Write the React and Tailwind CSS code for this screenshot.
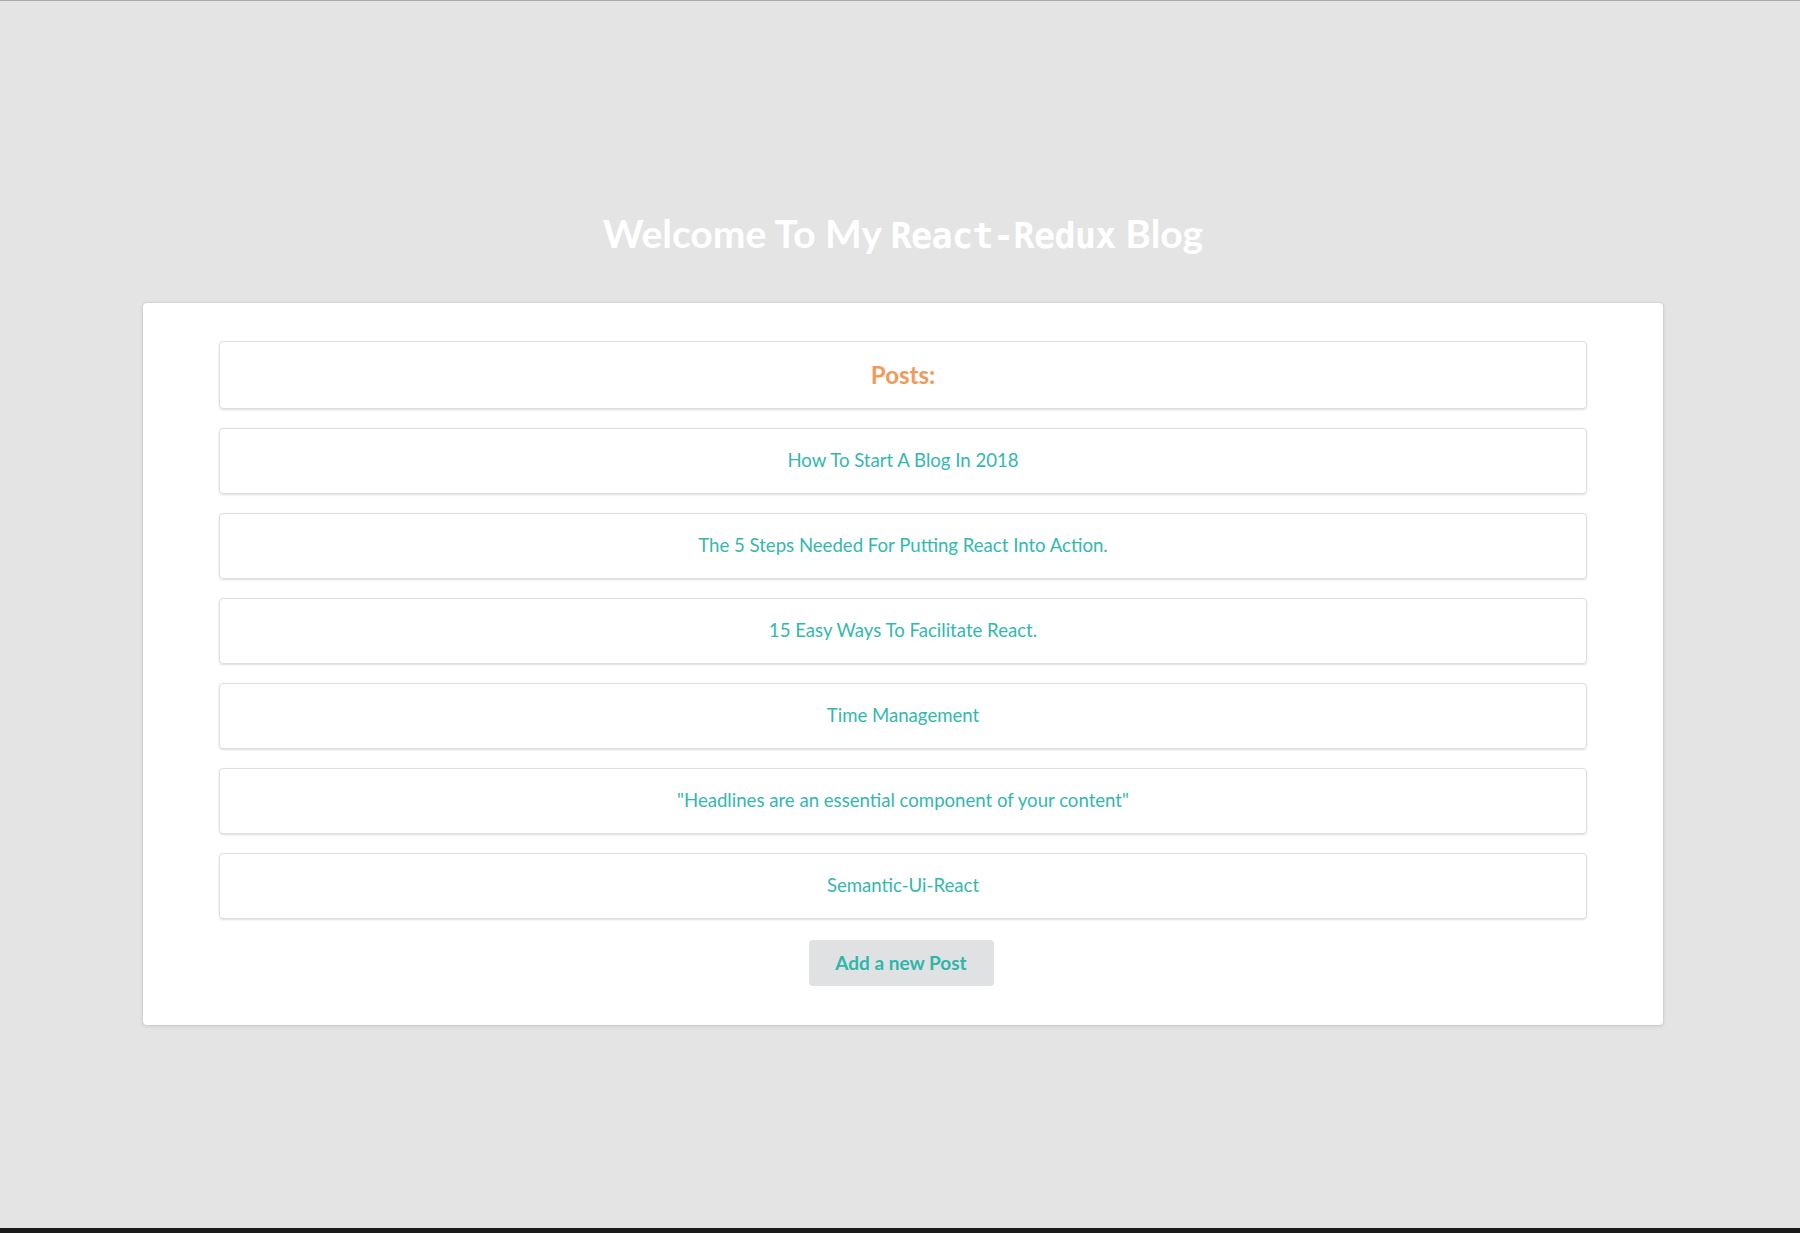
import React from "react";

const posts = [
  "How To Start A Blog In 2018",
  "The 5 Steps Needed For Putting React Into Action.",
  "15 Easy Ways To Facilitate React.",
  "Time Management",
  "\"Headlines are an essential component of your content\"",
  "Semantic-Ui-React",
];

export default function App() {
  return (
    <div
      className="h-[1233px] flex flex-col bg-[#e4e4e4] border-t border-[#a9a9a9] overflow-hidden"
      style={{ fontFamily: "Lato, 'Noto Sans', sans-serif" }}
    >
      <div className="flex-1 pl-[143px] pr-[137px]">
        <h1 className="mt-[208px] text-center text-[39px] leading-[48px] font-bold text-white">
          Welcome To My{" "}
          <code
            className="text-[35px] font-bold tracking-[-0.6px]"
            style={{ fontFamily: "'DejaVu Sans Mono', monospace" }}
          >
            React-Redux
          </code>{" "}
          Blog
        </h1>

        <div className="mt-[43px] bg-white rounded-[4px] shadow-[0_1px_4px_0_#c8c8c9,0_0_0_1px_#d8d8d9] px-[76px] pt-[38px] pb-[39px]">
          <div className="h-[68px] flex items-center justify-center rounded-[4px] border border-[#dedede] shadow-[0_1px_2px_0_rgba(34,36,38,0.15)]">
            <span className="text-[24px] font-bold text-[#f09a5c]">Posts:</span>
          </div>

          <div className="mt-[19px] flex flex-col gap-[19px]">
            {posts.map((p) => (
              <div
                key={p}
                className="h-[66px] flex items-center justify-center rounded-[4px] border border-[#dedede] shadow-[0_1px_2px_0_rgba(34,36,38,0.15)]"
              >
                <span className="text-[18.6px] text-[#33b8ad]">{p}</span>
              </div>
            ))}
          </div>

          <div className="mt-[21px] flex justify-center">
            <button className="h-[46px] w-[185px] rounded-[4px] bg-[#e0e1e2] text-[19px] font-bold text-[#2fb6ab] -translate-x-[2px]">
              Add a new Post
            </button>
          </div>
        </div>
      </div>
      <div className="h-[5px] bg-[#1a1a1a]" />
    </div>
  );
}
